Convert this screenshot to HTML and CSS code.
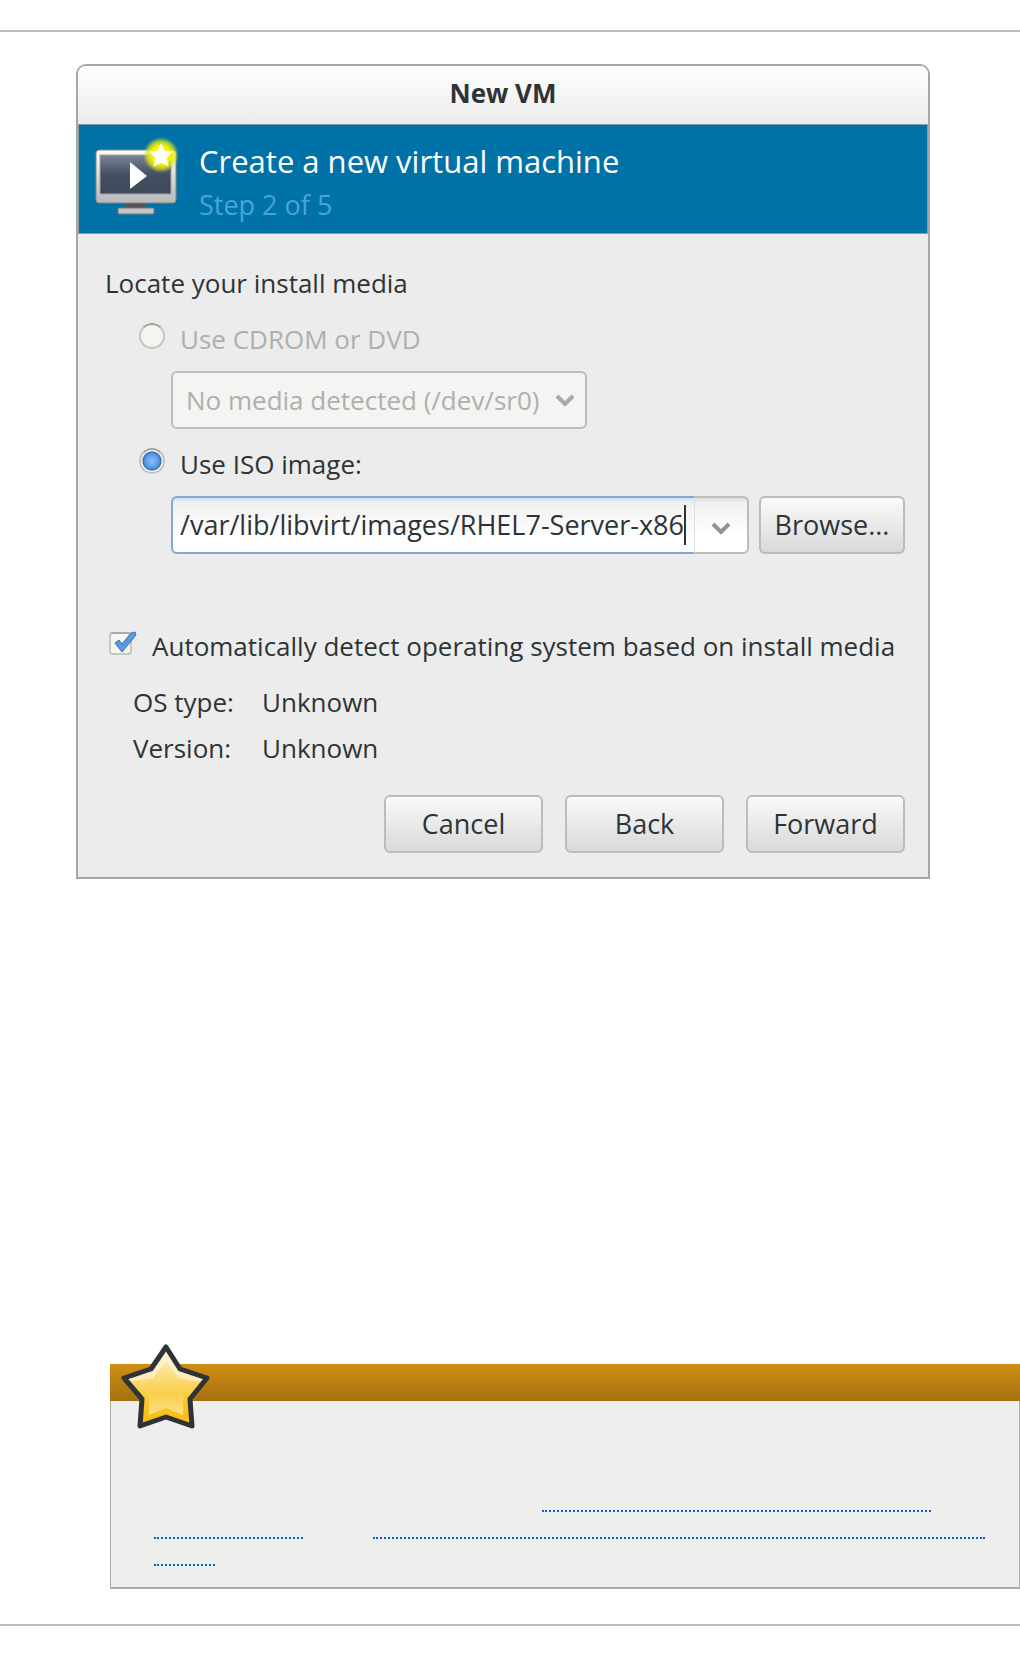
FILE: index.html
```html
<!DOCTYPE html>
<html lang="en">
<head>
    <meta charset="UTF-8">
    <meta name="viewport" content="width=device-width, initial-scale=1.0">
    <title>New VM</title>
    <link rel="stylesheet" href="styles.css">
</head>
<body>

<main class="page">
    <form class="window">
        <h1 class="titlebar">New VM</h1>

        <div class="banner">
            <svg class="banner-icon" viewBox="0 0 84 80" width="84" height="80" aria-hidden="true">
                <defs>
                    <linearGradient id="frame" x1="0" y1="0" x2="0" y2="1">
                        <stop offset="0" stop-color="#ffffff"/>
                        <stop offset="1" stop-color="#b8b8b8"/>
                    </linearGradient>
                    <linearGradient id="screen" x1="0" y1="0" x2="0" y2="1">
                        <stop offset="0" stop-color="#7b8797"/>
                        <stop offset="0.5" stop-color="#434f61"/>
                        <stop offset="1" stop-color="#3e495c"/>
                    </linearGradient>
                    <radialGradient id="glow">
                        <stop offset="0.5" stop-color="#fbf600"/>
                        <stop offset="0.75" stop-color="#e8ea10" stop-opacity="0.75"/>
                        <stop offset="1" stop-color="#c8d820" stop-opacity="0"/>
                    </radialGradient>
                </defs>
                <rect x="31" y="65" width="20" height="7" fill="#555"/>
                <rect x="23" y="71" width="36" height="6" rx="1" fill="#c4c4c4" stroke="#777"/>
                <rect x="1" y="13" width="80" height="53" rx="3" fill="url(#frame)" stroke="#858585"/>
                <rect x="5" y="18" width="71" height="39" fill="url(#screen)" stroke="#a0a4aa"/>
                <path d="M35 25v27l17-13z" fill="#fff"/>
                <circle cx="66" cy="18" r="18" fill="url(#glow)"/>
                <path d="M66 7l3 7 8 1-6 6 2 8-7-4-7 4 2-8-6-6 8-1z" fill="#fff" stroke="#fff" stroke-linejoin="round"/>
            </svg>
            <div class="banner-text">
                <h2 class="banner-title">Create a new virtual machine</h2>
                <p class="banner-step">Step 2 of 5</p>
            </div>
        </div>

        <div class="content">
            <p class="heading">Locate your install media</p>

            <div class="option disabled">
                <input type="radio" id="use-cdrom" name="media" disabled>
                <label for="use-cdrom">Use CDROM or DVD</label>
            </div>
            <div class="select-box">
                <select aria-labelledby="use-cdrom" disabled>
                    <option>No media detected (/dev/sr0)</option>
                </select>
                <svg class="chevron" viewBox="0 0 20 13" width="20" height="13" aria-hidden="true"><path d="M2 2l8 8 8-8"/></svg>
            </div>

            <div class="option">
                <input type="radio" id="use-iso" name="media" checked>
                <label for="use-iso">Use ISO image:</label>
            </div>
            <div class="iso-row">
                <div class="combo">
                    <div class="combo-entry">
                        <input type="text" aria-labelledby="use-iso" value="/var/lib/libvirt/images/RHEL7-Server-x86">
                        <span class="caret"></span>
                    </div>
                    <button type="button" class="combo-toggle">
                        <svg viewBox="0 0 20 13" width="20" height="13" aria-hidden="true"><path d="M2 2l8 8 8-8"/></svg>
                    </button>
                </div>
                <button type="button" class="btn browse">Browse...</button>
            </div>

            <div class="detect">
                <span class="check">
                    <input type="checkbox" id="detect-os" checked>
                    <svg viewBox="0 0 28 24" width="28" height="24" aria-hidden="true"><path d="M6 12l4-3 3 4 9-11 4-1 1 3-14 17z"/></svg>
                </span>
                <label for="detect-os">Automatically detect operating system based on install media</label>
            </div>

            <dl class="details">
                <dt>OS type:</dt>
                <dd>Unknown</dd>
                <dt>Version:</dt>
                <dd>Unknown</dd>
            </dl>

            <div class="actions">
                <button type="button" class="btn">Cancel</button>
                <button type="button" class="btn">Back</button>
                <button type="submit" class="btn">Forward</button>
            </div>
        </div>
    </form>

    <section class="note">
        <div class="note-header">
            <svg class="note-star" viewBox="0 0 90 88" width="90" height="88" aria-hidden="true">
                <defs>
                    <linearGradient id="star-edge" x1="0" y1="0" x2="0" y2="1">
                        <stop offset="0" stop-color="#fff6dc"/>
                        <stop offset="0.42" stop-color="#fdeab8"/>
                        <stop offset="0.44" stop-color="#fbd767"/>
                        <stop offset="0.7" stop-color="#fbc62a"/>
                        <stop offset="1" stop-color="#f8bb0c"/>
                    </linearGradient>
                    <linearGradient id="star-fill" x1="0" y1="0" x2="0" y2="1">
                        <stop offset="0" stop-color="#fde9a8"/>
                        <stop offset="0.6" stop-color="#fbcf4a"/>
                        <stop offset="1" stop-color="#fce08a"/>
                    </linearGradient>
                </defs>
                <path d="M45 3L59 25 86 34 69 55 71 82 45 73 19 82 21 55 3 34 30 25z" fill="url(#star-edge)" stroke="#2e3436" stroke-width="5" stroke-linejoin="round"/>
                <path d="M45 18L58 34 74 37 62 53 62 71 45 64 28 71 28 53 15 37 32 34z" fill="url(#star-fill)"/>
            </svg>
        </div>
        <div class="note-body">
            <div class="note-line note-line-end"><a href="#" class="link link-medium"></a></div>
            <div class="note-line"><a href="#" class="link link-short"></a><a href="#" class="link link-long"></a></div>
            <div class="note-line"><a href="#" class="link link-tiny"></a></div>
        </div>
    </section>
</main>

</body>
</html>
```

FILE: styles.css
```css
* {
    box-sizing: border-box;
}
body {
    margin: 0;
    padding: 30px 0;
    background-color: #ffffff;
    color: #2e3436;
    font-family: "Open Sans", "Noto Sans", sans-serif;
    font-size: 26px;
    line-height: 32px;
}
h1, h2, p, dl, dd {
    margin: 0;
    font-weight: normal;
}
button, input, select {
    margin: 0;
    color: inherit;
    font: inherit;
}
.page {
    padding: 32px 0 35px;
    border-top: 2px solid #bbbbbb;
    border-bottom: 2px solid #bbbbbb;
}

/* wizard window */
.window {
    max-width: 854px;
    margin-left: 76px;
    border: 2px solid #a6a6a6;
    border-radius: 10px 10px 0 0;
    background-color: #ececec;
    overflow: hidden;
}
.titlebar {
    padding: 11px 0 15px;
    background: linear-gradient(#ffffff, #ebebeb);
    font-size: 26px;
    font-weight: bold;
    text-align: center;
}
.banner {
    display: flex;
    gap: 20px;
    height: 110px;
    padding: 12px 16px;
    border: 1px solid #8c9ea5;
    background-color: #0072a8;
}
.banner-text {
    padding-top: 2px;
}
.banner-title {
    color: #ffffff;
    font-size: 31px;
    line-height: 44px;
}
.banner-step {
    color: #48a4d8;
    font-size: 27px;
    line-height: 44px;
}
.content {
    padding: 33px 23px 24px 27px;
}
.option {
    display: flex;
    align-items: flex-start;
    gap: 15px;
    margin: 24px 0 16px 34px;
}
.select-box + .option {
    margin-top: 19px;
}
.disabled {
    color: #adb0ad;
}
.option input {
    appearance: none;
    width: 26px;
    height: 26px;
    border: 2px solid #c3c6bd;
    border-top-color: #a3a799;
    border-radius: 50%;
    background-color: #f4f4f1;
}
.option input:checked {
    background: radial-gradient(circle, #8fc0f7 0, #5c9fe8 6px, #4a8cdb 8px, #2c62ab 9px, #f4f4f1 10px);
}
.select-box {
    position: relative;
    width: 416px;
    margin-left: 66px;
}
.select-box select {
    appearance: none;
    display: block;
    width: 100%;
    height: 58px;
    padding: 0 40px 0 13px;
    border: 2px solid #bbbdb9;
    border-radius: 6px;
    background-color: #f4f4f2;
    color: #adb0ad;
    opacity: 1;
}
.chevron, .combo-toggle svg {
    fill: none;
    stroke: #a8aaa7;
    stroke-width: 4px;
}
.chevron {
    position: absolute;
    top: 23px;
    right: 12px;
    pointer-events: none;
}
.iso-row {
    display: flex;
    gap: 10px;
    height: 58px;
    margin-left: 66px;
}
.combo {
    display: flex;
    flex: 1;
    min-width: 0;
}
.combo-entry {
    display: flex;
    align-items: center;
    flex: 1;
    min-width: 0;
    padding: 0 8px 0 7px;
    border: 2px solid #80aad6;
    border-right: 0;
    border-radius: 6px 0 0 6px;
    background: linear-gradient(#d5dfec, #f0f0f1 5px, #ffffff 70%);
}
.combo-entry input {
    flex: 1;
    min-width: 0;
    padding: 0;
    border: 0;
    outline: 0;
    background: none;
    font-size: 27px;
    line-height: 40px;
}
.caret {
    width: 2px;
    height: 40px;
    background-color: #2e3436;
}
.combo-toggle {
    width: 55px;
    border: 2px solid #bbbdb9;
    border-left: 1px solid #dddddd;
    border-radius: 0 6px 6px 0;
    background: linear-gradient(#dddddd, #f1f1f1 5px, #ffffff 70%);
}
.combo-toggle svg {
    stroke: #93938f;
}
.btn {
    width: 159px;
    height: 58px;
    padding: 0;
    border: 2px solid #bbbdb9;
    border-radius: 6px;
    background: linear-gradient(#fafafa, #d9d9d9);
    font-size: 27px;
}
.browse {
    width: 146px;
}
.detect {
    display: flex;
    align-items: center;
    gap: 15px;
    margin: 76px 0 24px 4px;
    white-space: nowrap;
}
.check {
    position: relative;
    width: 28px;
    height: 32px;
}
.check input {
    appearance: none;
    display: block;
    width: 23px;
    height: 23px;
    margin-top: 2px;
    border: 2px solid #c6c8bd;
    border-top-color: #a9ac9f;
    border-radius: 4px;
    background-color: #f6f6f3;
}
.check svg {
    position: absolute;
    top: 1px;
    left: 0;
    fill: #5a9be0;
    stroke: #336fb5;
    stroke-linejoin: round;
    pointer-events: none;
}
.details {
    display: grid;
    grid-template-columns: 129px 1fr;
    row-gap: 14px;
    margin-left: 28px;
}
.actions {
    display: flex;
    justify-content: flex-end;
    gap: 22px;
    margin-top: 31px;
}

/* important note */
.note {
    margin: 485px 0 0 110px;
    border: 1px solid #aaaaaa;
    border-top: 0;
    border-bottom-width: 2px;
    background-color: #eeeeec;
}
.note-header {
    position: relative;
    height: 37px;
    margin: 0 -1px;
    background: linear-gradient(#d08e13, #a6700f);
}
.note-star {
    position: absolute;
    top: -20px;
    left: 11px;
}
.note-body {
    padding: 84px 34px 21px 43px;
}
.note-line {
    display: flex;
    gap: 70px;
    height: 27px;
}
.note-line-end {
    justify-content: flex-end;
    padding-right: 54px;
}
.link {
    border-bottom: 2px dotted #0066cc;
}
.link-medium {
    width: 389px;
}
.link-short {
    width: 149px;
}
.link-long {
    flex: 1;
}
.link-tiny {
    width: 61px;
}
```
